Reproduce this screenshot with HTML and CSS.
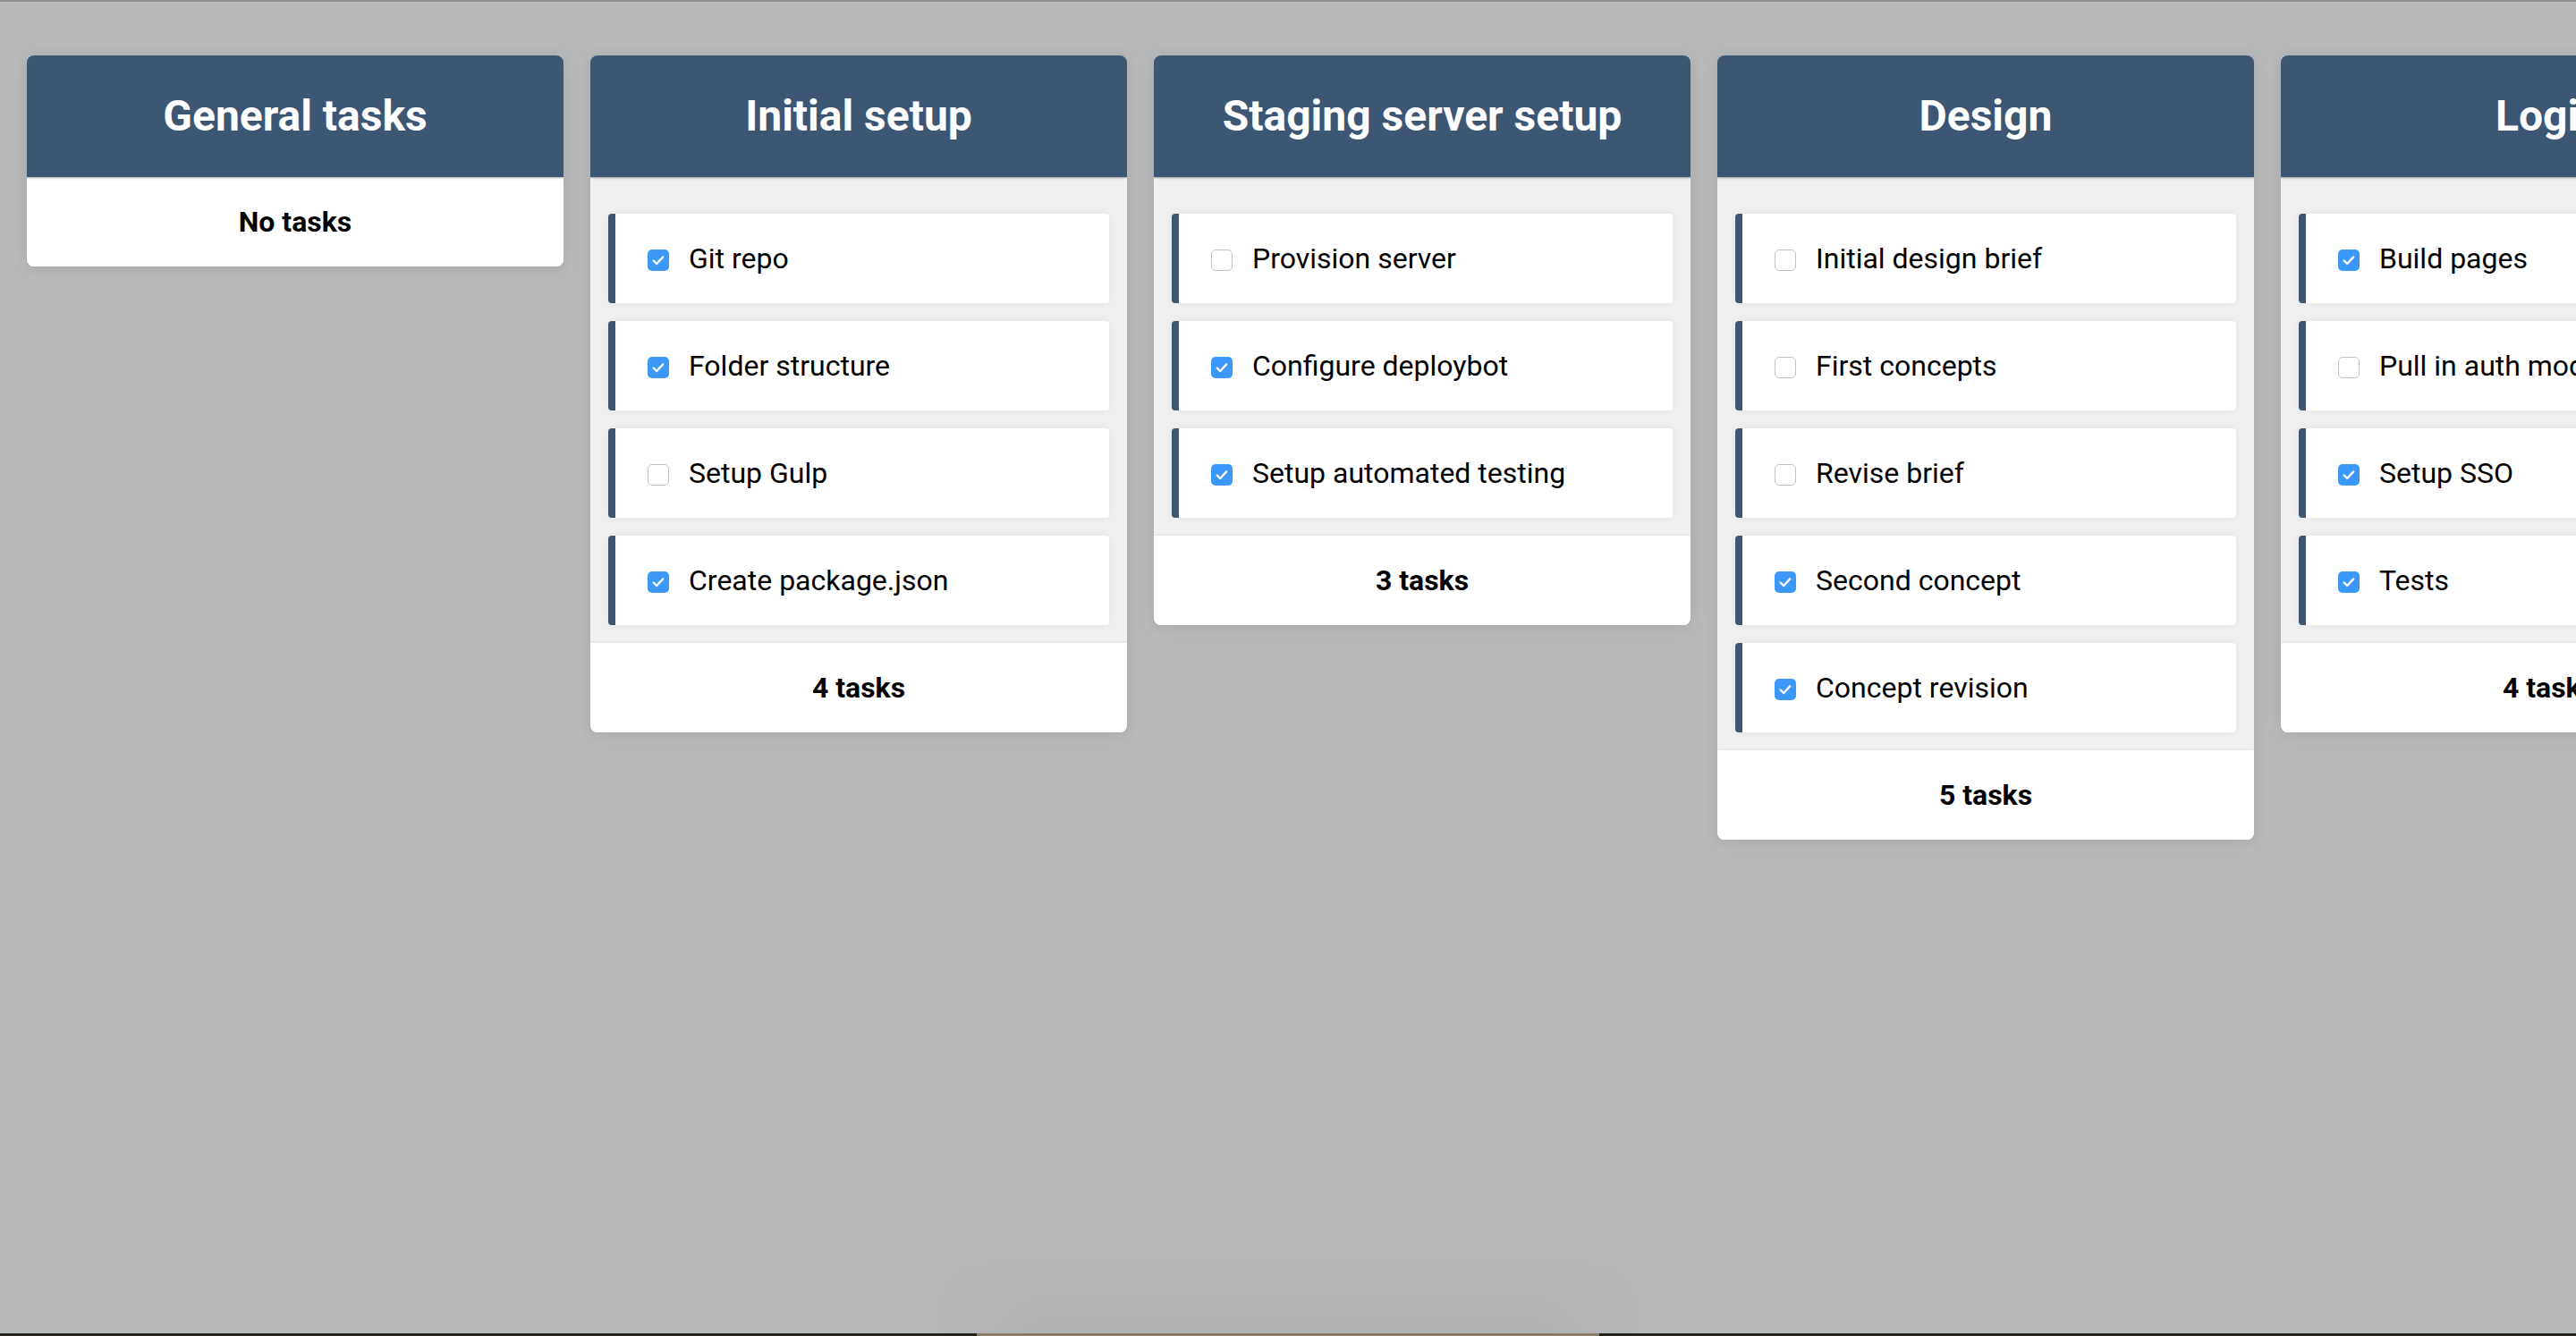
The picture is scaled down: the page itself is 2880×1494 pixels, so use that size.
FILE: index.html
```html
<!DOCTYPE html>
<html lang="en">
<head>
<meta charset="utf-8">
<title>Task board</title>
<link rel="stylesheet" href="styles.css">
</head>
<body>
<main class="board">
  <section class="list">
    <header class="list-head">General tasks</header>
    <footer class="list-foot">No tasks</footer>
  </section>

  <section class="list">
    <header class="list-head">Initial setup</header>
    <div class="list-body">
      <div class="task"><span class="check on"><svg viewBox="0 0 24 24"><path d="M6.8 12.6l3.4 3.4 7-7.6"/></svg></span><span class="task-text">Git repo</span></div>
      <div class="task"><span class="check on"><svg viewBox="0 0 24 24"><path d="M6.8 12.6l3.4 3.4 7-7.6"/></svg></span><span class="task-text">Folder structure</span></div>
      <div class="task"><span class="check"></span><span class="task-text">Setup Gulp</span></div>
      <div class="task"><span class="check on"><svg viewBox="0 0 24 24"><path d="M6.8 12.6l3.4 3.4 7-7.6"/></svg></span><span class="task-text">Create package.json</span></div>
    </div>
    <footer class="list-foot">4 tasks</footer>
  </section>

  <section class="list">
    <header class="list-head">Staging server setup</header>
    <div class="list-body">
      <div class="task"><span class="check"></span><span class="task-text">Provision server</span></div>
      <div class="task"><span class="check on"><svg viewBox="0 0 24 24"><path d="M6.8 12.6l3.4 3.4 7-7.6"/></svg></span><span class="task-text">Configure deploybot</span></div>
      <div class="task"><span class="check on"><svg viewBox="0 0 24 24"><path d="M6.8 12.6l3.4 3.4 7-7.6"/></svg></span><span class="task-text">Setup automated testing</span></div>
    </div>
    <footer class="list-foot">3 tasks</footer>
  </section>

  <section class="list">
    <header class="list-head">Design</header>
    <div class="list-body">
      <div class="task"><span class="check"></span><span class="task-text">Initial design brief</span></div>
      <div class="task"><span class="check"></span><span class="task-text">First concepts</span></div>
      <div class="task"><span class="check"></span><span class="task-text">Revise brief</span></div>
      <div class="task"><span class="check on"><svg viewBox="0 0 24 24"><path d="M6.8 12.6l3.4 3.4 7-7.6"/></svg></span><span class="task-text">Second concept</span></div>
      <div class="task"><span class="check on"><svg viewBox="0 0 24 24"><path d="M6.8 12.6l3.4 3.4 7-7.6"/></svg></span><span class="task-text">Concept revision</span></div>
    </div>
    <footer class="list-foot">5 tasks</footer>
  </section>

  <section class="list">
    <header class="list-head">Login</header>
    <div class="list-body">
      <div class="task"><span class="check on"><svg viewBox="0 0 24 24"><path d="M6.8 12.6l3.4 3.4 7-7.6"/></svg></span><span class="task-text">Build pages</span></div>
      <div class="task"><span class="check"></span><span class="task-text">Pull in auth module</span></div>
      <div class="task"><span class="check on"><svg viewBox="0 0 24 24"><path d="M6.8 12.6l3.4 3.4 7-7.6"/></svg></span><span class="task-text">Setup SSO</span></div>
      <div class="task"><span class="check on"><svg viewBox="0 0 24 24"><path d="M6.8 12.6l3.4 3.4 7-7.6"/></svg></span><span class="task-text">Tests</span></div>
    </div>
    <footer class="list-foot">4 tasks</footer>
  </section>
</main>
<div class="dock-shadow"></div>
<div class="screen-edge"><span class="screen-edge-mid"></span></div>
</body>
</html>
```

FILE: styles.css
```css
html, body {
  margin: 0;
  padding: 0;
  height: 100%;
}

body {
  background: #b8b9bb;
  overflow: hidden;
  font-family: Roboto, "Liberation Sans", Arial, sans-serif;
  color: #000;
}

.board {
  box-sizing: border-box;
  height: 100%;
  border-top: 2px solid #8d8e8f;
  padding: 60px 30px 0;
  display: flex;
  flex-direction: row;
  align-items: flex-start;
  gap: 30px;
}

.list {
  flex: 0 0 600px;
  width: 600px;
  border-radius: 8px;
  overflow: hidden;
  background: #fff;
  box-shadow: 0 2px 18px rgba(0, 0, 0, 0.10);
  display: flex;
  flex-direction: column;
}

.list-head {
  position: relative;
  z-index: 1;
  background: #3c5674;
  color: #fff;
  font-weight: 700;
  font-size: 48px;
  line-height: 56px;
  padding: 40px 20px;
  text-align: center;
  white-space: nowrap;
  box-shadow: 0 1px 2px rgba(0, 0, 0, 0.35);
}

.list-body {
  background: #f0f0f0;
  padding: 20px 20px 20px;
  display: flex;
  flex-direction: column;
  gap: 20px;
}

.task {
  height: 100px;
  box-sizing: border-box;
  background: #fff;
  border-left: 8px solid #3c5674;
  border-radius: 4px;
  box-shadow: 0 0 8px rgba(0, 0, 0, 0.06);
  display: flex;
  align-items: center;
  padding-left: 36px;
  gap: 22px;
  white-space: nowrap;
}

.list-body .task:first-child {
  margin-top: 21px;
}

.check {
  flex: 0 0 24px;
  width: 24px;
  height: 24px;
  box-sizing: border-box;
  margin-top: 4px;
  border-radius: 5px;
  border: 1.5px solid #c2c2c2;
  background: #fff;
  display: flex;
  align-items: center;
  justify-content: center;
}

.check.on {
  border: none;
  background: #3b97f8;
}

.check svg {
  width: 24px;
  height: 24px;
}

.check svg path {
  fill: none;
  stroke: #fff;
  stroke-width: 2.4;
  stroke-linecap: round;
  stroke-linejoin: round;
}

.task-text {
  font-size: 32px;
  line-height: 40px;
  font-weight: 400;
  color: #000;
}

.list-foot {
  position: relative;
  background: #fff;
  font-weight: 700;
  font-size: 32px;
  line-height: 40px;
  padding: 30px 20px 30px;
  text-align: center;
  color: #000;
  box-shadow: 0 -1px 3px rgba(0, 0, 0, 0.06);
}

.dock-shadow {
  position: fixed;
  left: 1040px;
  width: 800px;
  bottom: 3px;
  height: 90px;
  background: linear-gradient(to bottom, rgba(0, 0, 0, 0), rgba(0, 0, 0, 0.045));
  -webkit-mask-image: linear-gradient(to right, transparent, #000 15%, #000 85%, transparent);
  mask-image: linear-gradient(to right, transparent, #000 15%, #000 85%, transparent);
  pointer-events: none;
}

.screen-edge {
  position: fixed;
  left: 0;
  right: 0;
  bottom: 0;
  height: 3px;
  background: #26231f;
}

.screen-edge-mid {
  position: absolute;
  left: 1092px;
  width: 696px;
  top: 0;
  bottom: 0;
  background: #8a7a6a;
}
```
